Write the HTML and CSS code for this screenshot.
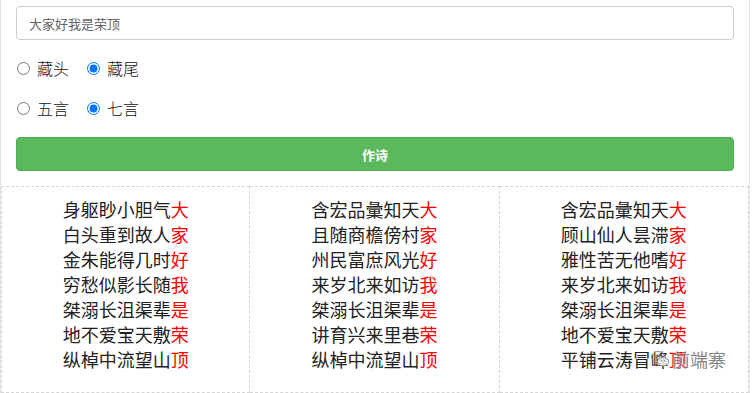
FILE: index.html
```html
<!DOCTYPE html>
<html lang="zh">
<head>
    <meta charset="UTF-8">
    <meta name="viewport" content="width=device-width, initial-scale=1.0">
    <title>藏头诗</title>
    <link rel="stylesheet" href="styles.css">
</head>
<body>
    <div class="page">
        <div class="form">
            <input class="words" type="text" placeholder="大家好我是荣顶">

            <!-- 藏头 / 藏尾 -->
            <div class="options first">
                <label><input type="radio" name="pos"> 藏头</label>
                <label><input type="radio" name="pos" checked> 藏尾</label>
            </div>

            <!-- 五言 / 七言 -->
            <div class="options">
                <label><input type="radio" name="len"> 五言</label>
                <label><input type="radio" name="len" checked> 七言</label>
            </div>

            <button class="make">作诗</button>
        </div>

        <div class="poems">
            <div class="poem">
                <p>身躯眇小胆气<span class="key">大</span></p>
                <p>白头重到故人<span class="key">家</span></p>
                <p>金朱能得几时<span class="key">好</span></p>
                <p>穷愁似影长随<span class="key">我</span></p>
                <p>桀溺长沮渠辈<span class="key">是</span></p>
                <p>地不爱宝天敷<span class="key">荣</span></p>
                <p>纵棹中流望山<span class="key">顶</span></p>
            </div>
            <div class="poem">
                <p>含宏品彙知天<span class="key">大</span></p>
                <p>且随商檐傍村<span class="key">家</span></p>
                <p>州民富庶风光<span class="key">好</span></p>
                <p>来岁北来如访<span class="key">我</span></p>
                <p>桀溺长沮渠辈<span class="key">是</span></p>
                <p>讲育兴来里巷<span class="key">荣</span></p>
                <p>纵棹中流望山<span class="key">顶</span></p>
            </div>
            <div class="poem">
                <p>含宏品彙知天<span class="key">大</span></p>
                <p>顾山仙人昙滞<span class="key">家</span></p>
                <p>雅性苦无他嗜<span class="key">好</span></p>
                <p>来岁北来如访<span class="key">我</span></p>
                <p>桀溺长沮渠辈<span class="key">是</span></p>
                <p>地不爱宝天敷<span class="key">荣</span></p>
                <p>平铺云涛冒峰<span class="key">顶</span></p>
            </div>
        </div>

        <!-- 水印 -->
        <div class="mark">
            <svg width="20" height="18" viewBox="0 0 20 18">
                <ellipse cx="8" cy="7" rx="6.5" ry="5.5" fill="none" stroke="#8a8a8a" stroke-width="1"/>
                <ellipse cx="13" cy="11.5" rx="5.5" ry="4.5" fill="rgba(255,255,255,0.8)" stroke="#8a8a8a" stroke-width="1"/>
                <circle cx="6" cy="6" r="0.9" fill="#8a8a8a"/>
                <circle cx="10" cy="6" r="0.9" fill="#8a8a8a"/>
                <circle cx="11.5" cy="10.5" r="0.7" fill="#8a8a8a"/>
                <circle cx="14.5" cy="10.5" r="0.7" fill="#8a8a8a"/>
            </svg>
            <span>前端寨</span>
        </div>
    </div>
</body>
</html>
```

FILE: styles.css
```css
body, html {
    margin: 0;
    padding: 0;
    background: #fff;
    font-family: "Noto Sans CJK SC", "Noto Sans", sans-serif;
}
.page {
    position: relative;
    width: 750px;
    border-left: 1px solid #e3e3e3;
    border-right: 1px solid #e3e3e3;
    box-sizing: border-box;
}
.form {
    padding: 6px 15px 0 15px;
}
.words {
    display: block;
    width: 100%;
    height: 34px;
    box-sizing: border-box;
    border: 1px solid #ccc;
    border-radius: 4px;
    padding: 0 12px;
    font-family: inherit;
    font-size: 13px;
    color: #333;
}
.words::placeholder {
    color: #666;
}
.options {
    display: flex;
    align-items: center;
    height: 40px;
    gap: 17px;
}
.options.first {
    margin-top: 8px;
}
.options label {
    display: flex;
    align-items: center;
    font-size: 16px;
    font-weight: 300;
    color: #111;
}
.options input {
    margin: 0 7px 0 1px;
    width: 13px;
    height: 13px;
}
.make {
    display: block;
    width: 100%;
    height: 34px;
    margin-top: 9px;
    border: 1px solid #4cae4c;
    border-radius: 4px;
    background: #5cb85c;
    color: #fff;
    font-family: inherit;
    font-size: 13px;
    font-weight: bold;
}
.poems {
    display: grid;
    grid-template-columns: repeat(3, 1fr);
    margin-top: 15px;
}
.poem {
    border: 1px dashed #d6d6d6;
    border-left: none;
    padding: 10px 0 20px;
    text-align: center;
}
.poem:first-child {
    border-left: 1px dashed #d6d6d6;
}
.poem p {
    margin: 0;
    font-size: 18px;
    line-height: 25px;
    color: #222;
}
.key {
    color: #f00;
}
.mark {
    position: absolute;
    left: 649px;
    top: 346px;
    display: flex;
    align-items: center;
    gap: 2px;
}
.mark span {
    font-size: 18px;
    color: rgba(90, 90, 90, 0.75);
    text-shadow: 0 0 2px #fff;
}
```
